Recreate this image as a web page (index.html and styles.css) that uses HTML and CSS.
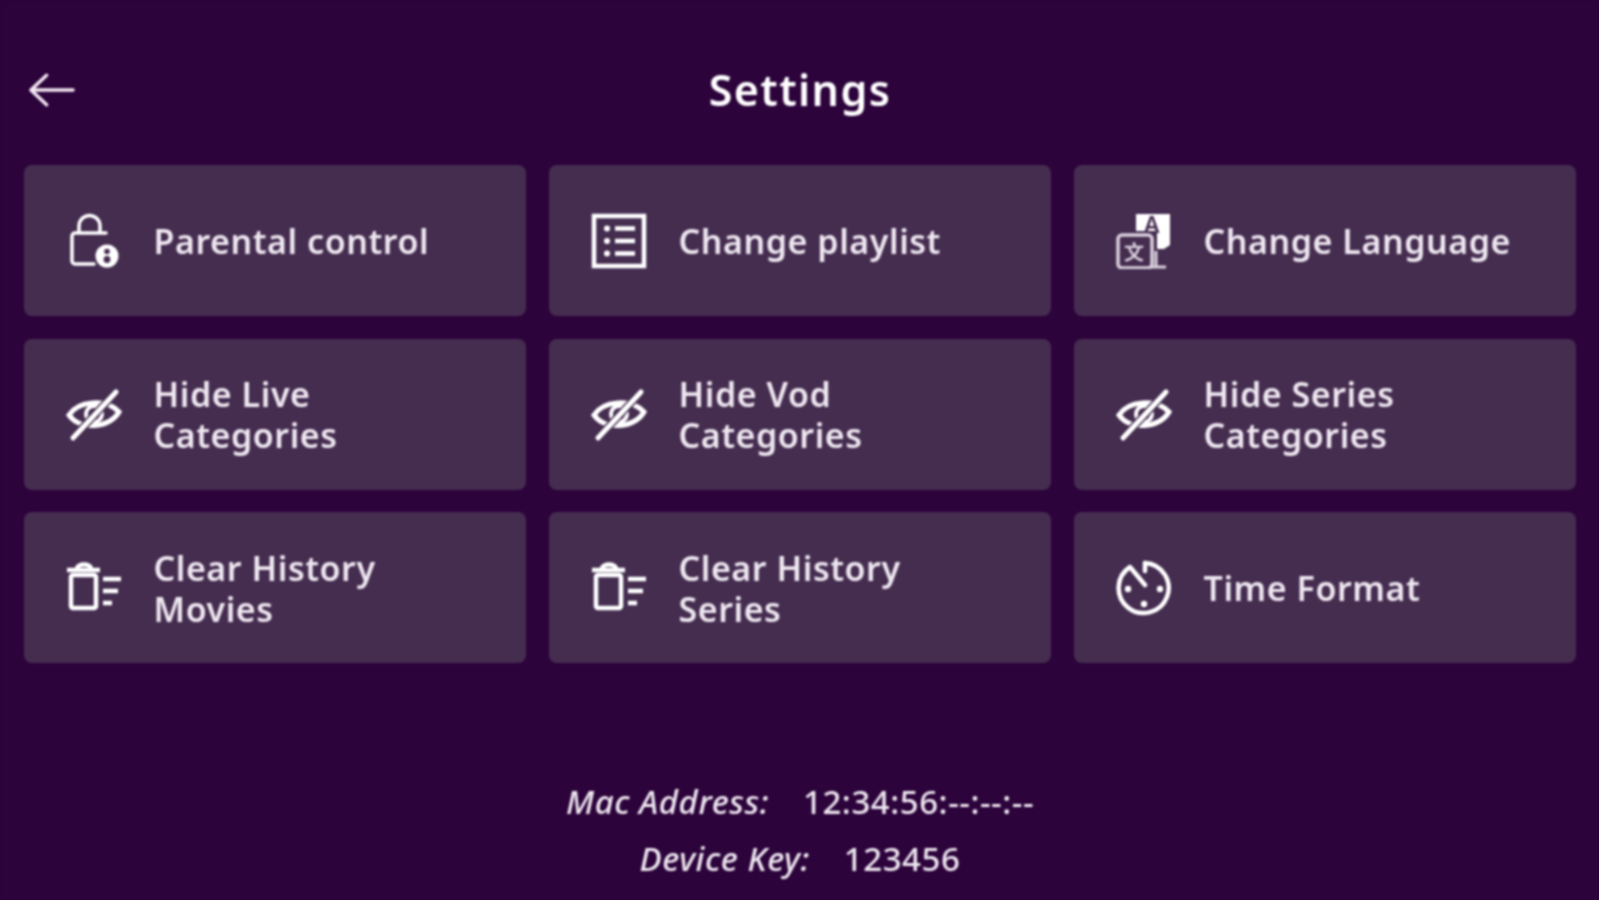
FILE: index.html
```html
<!DOCTYPE html>
<html lang="en">
<head>
<meta charset="utf-8">
<title>Settings</title>
<link rel="stylesheet" href="styles.css">
</head>
<body>
<svg class="defs" aria-hidden="true">
  <symbol id="i-lock" viewBox="0 0 56 56">
    <path d="M13 21V13a10.500 10.500 0 0 1 21 0V21" fill="none" stroke="#fff" stroke-width="3.500"/>
    <path d="M40 20H9a3 3 0 0 0-3 3V48a3 3 0 0 0 3 3H28" fill="none" stroke="#fff" stroke-width="3.500" stroke-linecap="round"/>
    <circle cx="41" cy="43" r="11.500" fill="#fff"/>
    <circle cx="41" cy="38.500" r="2.800" fill="#452d50"/>
    <circle cx="41" cy="46.500" r="3.400" fill="#452d50"/>
  </symbol>
  <symbol id="i-list" viewBox="0 0 56 56">
    <rect x="3" y="3" width="50" height="50" fill="none" stroke="#fff" stroke-width="4.500"/>
    <circle cx="16" cy="15.500" r="3" fill="#fff"/><circle cx="16" cy="28" r="3" fill="#fff"/><circle cx="16" cy="40.500" r="3" fill="#fff"/>
    <path d="M24 15.500H44M24 28H44M24 40.500H44" stroke="#fff" stroke-width="4.500"/>
  </symbol>
  <symbol id="i-lang" viewBox="0 0 56 56">
    <path d="M20 1H54V32L48 36H41V18H20Z" fill="#fff"/>
    <rect x="2" y="22" width="34" height="33" rx="4" fill="none" stroke="#d9cfdc" stroke-width="3.500"/>
    <path d="M40 38V54M34 54H50" stroke="#d9cfdc" stroke-width="3"/>
  </symbol>
  <symbol id="i-hide" viewBox="0 0 56 56">
    <path d="M3 29C12 15 40 12 53 26C44 42 14 45 3 29Z" fill="none" stroke="#fff" stroke-width="5"/>
    <circle cx="28" cy="28" r="8" fill="none" stroke="#fff" stroke-width="4"/>
    <path d="M7 52L50 6" stroke="#452d50" stroke-width="8"/>
    <path d="M7 52L50 6" stroke="#fff" stroke-width="5" stroke-linecap="round"/>
  </symbol>
  <symbol id="i-trash" viewBox="0 0 56 56">
    <path d="M1 10H34M11 9C11 3 25 3 25 9" fill="none" stroke="#fff" stroke-width="4.500"/>
    <rect x="5" y="15" width="25" height="33" rx="2" fill="none" stroke="#fff" stroke-width="4.500"/>
    <path d="M37 19H55M37 31H52M37 43H46" stroke="#fff" stroke-width="4.500"/>
  </symbol>
  <symbol id="i-clock" viewBox="0 0 56 56">
    <path d="M29 3A25 25 0 1 1 14 7L29 25" fill="none" stroke="#fff" stroke-width="4.500" stroke-linecap="round" stroke-linejoin="round"/>
    <path d="M29 3V11" stroke="#fff" stroke-width="4.500" stroke-linecap="round"/>
    <circle cx="12" cy="29" r="3.200" fill="#fff"/><circle cx="44" cy="29" r="3.200" fill="#fff"/><circle cx="28" cy="44" r="3.200" fill="#fff"/>
  </symbol>
</svg>

<main class="page">
  <header class="topbar">
    <button class="back" type="button" aria-label="Back">
      <svg class="back-icon" viewBox="0 0 48 36"><path d="M46 18H4M19 3L3 18L19 33" fill="none" stroke="#f2e6f2" stroke-width="3.600" stroke-linecap="round" stroke-linejoin="round"/></svg>
    </button>
    <h1 class="title">Settings</h1>
    <span></span>
  </header>

  <section class="grid">
    <a class="card"><svg class="icon"><use href="#i-lock"/></svg><span class="label">Parental control</span></a>
    <a class="card"><svg class="icon"><use href="#i-list"/></svg><span class="label">Change playlist</span></a>
    <a class="card">
      <span class="lang">
        <svg class="icon"><use href="#i-lang"/></svg>
        <span class="lang-a">A</span>
        <span class="lang-z">文</span>
      </span>
      <span class="label">Change Language</span>
    </a>
    <a class="card"><svg class="icon"><use href="#i-hide"/></svg><span class="label">Hide Live<br>Categories</span></a>
    <a class="card"><svg class="icon"><use href="#i-hide"/></svg><span class="label">Hide Vod<br>Categories</span></a>
    <a class="card"><svg class="icon"><use href="#i-hide"/></svg><span class="label">Hide Series<br>Categories</span></a>
    <a class="card"><svg class="icon"><use href="#i-trash"/></svg><span class="label">Clear History<br>Movies</span></a>
    <a class="card"><svg class="icon"><use href="#i-trash"/></svg><span class="label">Clear History<br>Series</span></a>
    <a class="card"><svg class="icon"><use href="#i-clock"/></svg><span class="label">Time Format</span></a>
  </section>

  <footer class="info">
    <p class="info-row"><em>Mac Address:</em><span>12:34:56:--:--:--</span></p>
    <p class="info-row"><em>Device Key:</em><span>123456</span></p>
  </footer>
</main>
</body>
</html>
```
FILE: styles.css
```css
* { box-sizing: border-box; }
html, body { margin: 0; height: 100%; background: #2c033b; overflow: hidden; }
.defs { display: none; }
.page {
  height: 900px;
  display: flex;
  flex-direction: column;
  padding: 0 23px 0 24px;
  font-family: "Noto Sans", "Open Sans", sans-serif;
  color: #f0e8f2;
  background: #2c033b;
  filter: blur(0.9px);
}
.topbar {
  height: 165px;
  padding-top: 15px;
  display: grid;
  grid-template-columns: 1fr auto 1fr;
  align-items: center;
}
.back { background: none; border: 0; padding: 0 0 0 4px; width: 60px; display: flex; }
.back-icon { width: 47px; height: 36px; }
.title { margin: 0; font-size: 43px; font-weight: 600; line-height: 48px; color: #fff; letter-spacing: 1.4px; }
.grid {
  display: grid;
  grid-template-columns: repeat(3, 502px);
  grid-auto-rows: 151px;
  gap: 22.5px 23px;
}
.card {
  display: flex;
  align-items: center;
  gap: 31.5px;
  padding-left: 42px;
  background: #452d50;
  border-radius: 8px;
}
.icon { width: 56px; height: 56px; flex: none; display: block; }
.lang { position: relative; width: 56px; height: 56px; flex: none; }
.lang-a { position: absolute; left: 28px; top: -3px; font-size: 23px; line-height: 28px; color: #452d50; font-weight: 600; }
.lang-z { position: absolute; left: 8px; top: 28px; font: 700 20px/22px "Noto Sans CJK SC", sans-serif; color: #d9cfdc; }
.label { padding-top: 2px; font-size: 34px; line-height: 41px; font-weight: 600; color: #eee7f0; letter-spacing: 0.55px; }
.info { margin-top: 110px; font-size: 33px; line-height: 57px; font-weight: 500; color: #eee7f0; }
.info-row { margin: 0; display: flex; justify-content: center; gap: 34px; letter-spacing: 0.55px; }
```
